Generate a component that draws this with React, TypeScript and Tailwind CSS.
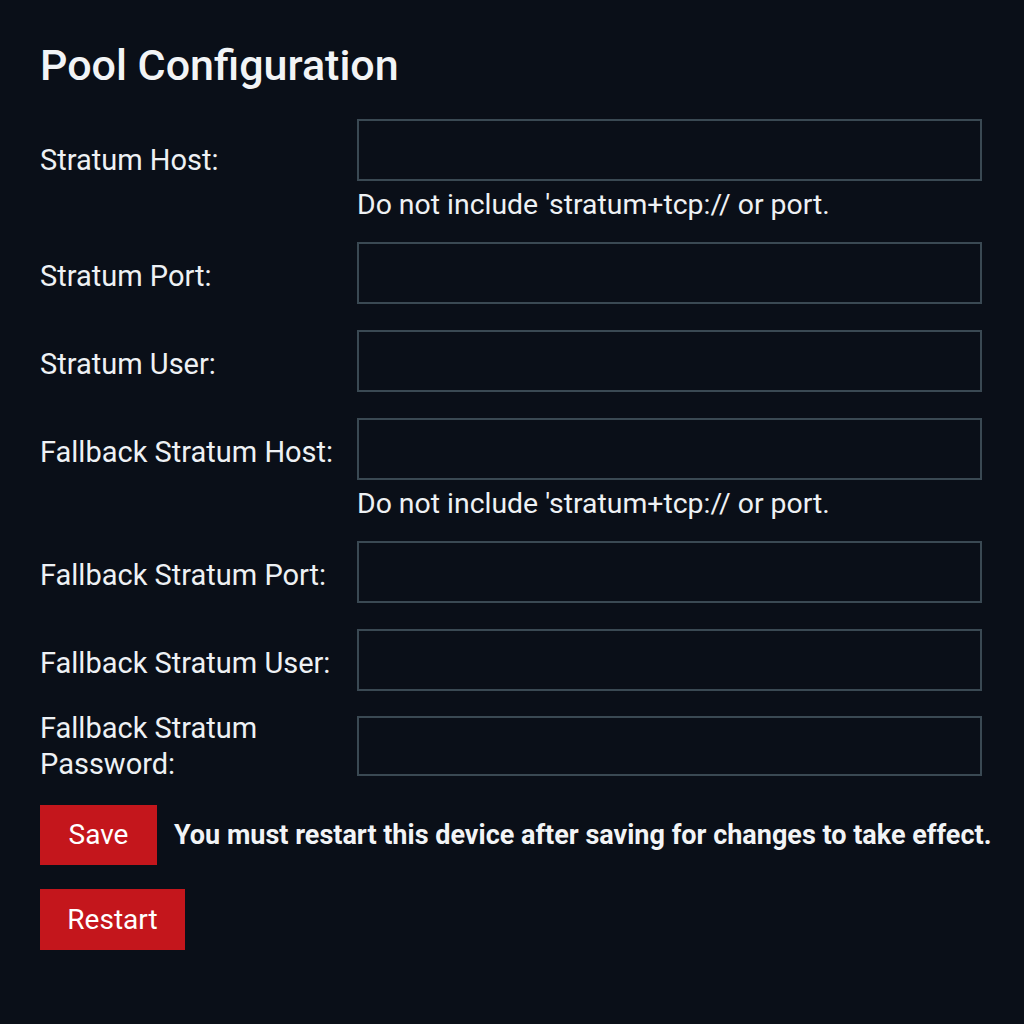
import React from 'react';

const font = { fontFamily: 'Roboto, "Liberation Sans", sans-serif' };

const Field = ({ label, hint, labelClass = 'mt-4' }: { label: string; hint?: boolean; labelClass?: string }) => (
  <div className="flex items-start">
    <label className={`w-[317px] shrink-0 text-[29px] leading-[36px] text-[#eef1f4] ${labelClass}`}>{label}</label>
    <div className="flex flex-col">
      <input className="w-[625px] h-[62px] border-2 border-[#3a4953] bg-transparent outline-none" />
      {hint && (
        <p className="mt-2 mb-[21px] text-[28.4px] leading-[32px] text-[#eef1f4]">
          Do not include 'stratum+tcp:// or port.
        </p>
      )}
    </div>
  </div>
);

export default function App() {
  return (
    <div className="min-h-[1024px] w-full bg-[#0a0f18] px-10 pt-[40px] text-white overflow-hidden" style={font}>
      <h1 className="text-[43px] leading-[50px] font-medium text-[#f2f4f6]">Pool Configuration</h1>

      <form className="mt-[29px] flex flex-col" onSubmit={(e) => e.preventDefault()}>
        <Field label="Stratum Host:" hint labelClass="mt-[23px]" />
        <div className="flex flex-col gap-[26px]">
          <Field label="Stratum Port:" />
          <Field label="Stratum User:" />
          <Field label="Fallback Stratum Host:" hint />
        </div>
        <div className="flex flex-col gap-[26px]">
          <Field label="Fallback Stratum Port:" />
          <Field label="Fallback Stratum User:" />
        </div>
        <div className="mt-[19px] flex items-center">
          <label className="w-[317px] shrink-0 text-[29px] leading-[36px] text-[#eef1f4]">
            Fallback Stratum
            <br />
            Password:
          </label>
          <input className="w-[625px] h-[60px] border-2 border-[#3a4953] bg-transparent outline-none" />
        </div>

        <div className="mt-[23px] flex items-center gap-[17px]">
          <button type="submit" className="w-[117px] h-[60px] shrink-0 bg-[#c4161c] text-[28px] text-white">
            Save
          </button>
          <span className="whitespace-nowrap text-[27px] font-bold text-[#f2f4f6]">
            You must restart this device after saving for changes to take effect.
          </span>
        </div>
        <div className="mt-[24px]">
          <button type="button" className="w-[145px] h-[61px] bg-[#c4161c] text-[28px] text-white">
            Restart
          </button>
        </div>
      </form>
    </div>
  );
}
